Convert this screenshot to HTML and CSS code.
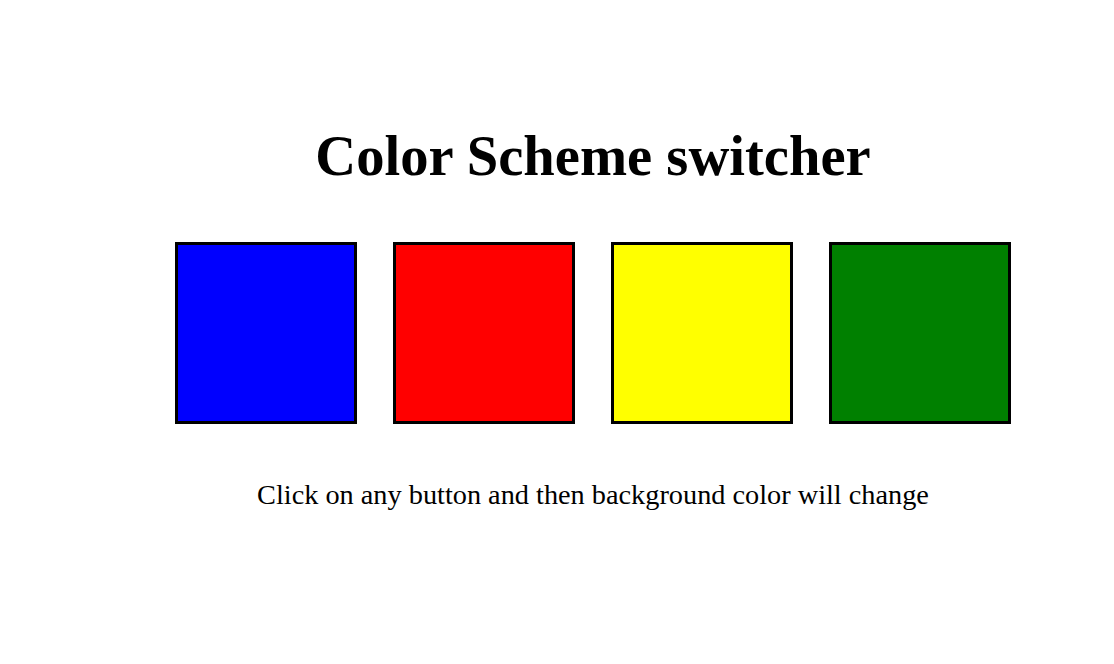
FILE: index.html
```html
<!DOCTYPE html>
<html>
<head>
<meta charset="utf-8">
<link rel="stylesheet" href="styles.css">
</head>
<body>
<div class="page">
  <h1 class="title">Color Scheme switcher</h1>
  <div class="buttons">
    <span class="btn blue"></span>
    <span class="btn red"></span>
    <span class="btn yellow"></span>
    <span class="btn green"></span>
  </div>
  <p class="note">Click on any button and then background color will change</p>
</div>
</body>
</html>
```
FILE: styles.css
```css
html, body {
  margin: 0;
  padding: 0;
  background: #fff;
}
.page {
  font-family: "Liberation Serif", "Times New Roman", serif;
  color: #000;
  padding-left: 72px;
  display: flex;
  flex-direction: column;
  align-items: center;
}
.title {
  margin: 124px 0 0;
  font-size: 56.6px;
  font-weight: bold;
  line-height: 64px;
}
.buttons {
  display: flex;
  gap: 36px;
  margin-top: 54px;
}
.btn {
  display: block;
  width: 176px;
  height: 176px;
  border: 3px solid #000;
}
.blue { background: #0000ff; }
.red { background: #ff0000; }
.yellow { background: #ffff00; }
.green { background: #008000; }
.note {
  margin: 56px 0 0;
  font-size: 28.3px;
  line-height: 30px;
}
```
